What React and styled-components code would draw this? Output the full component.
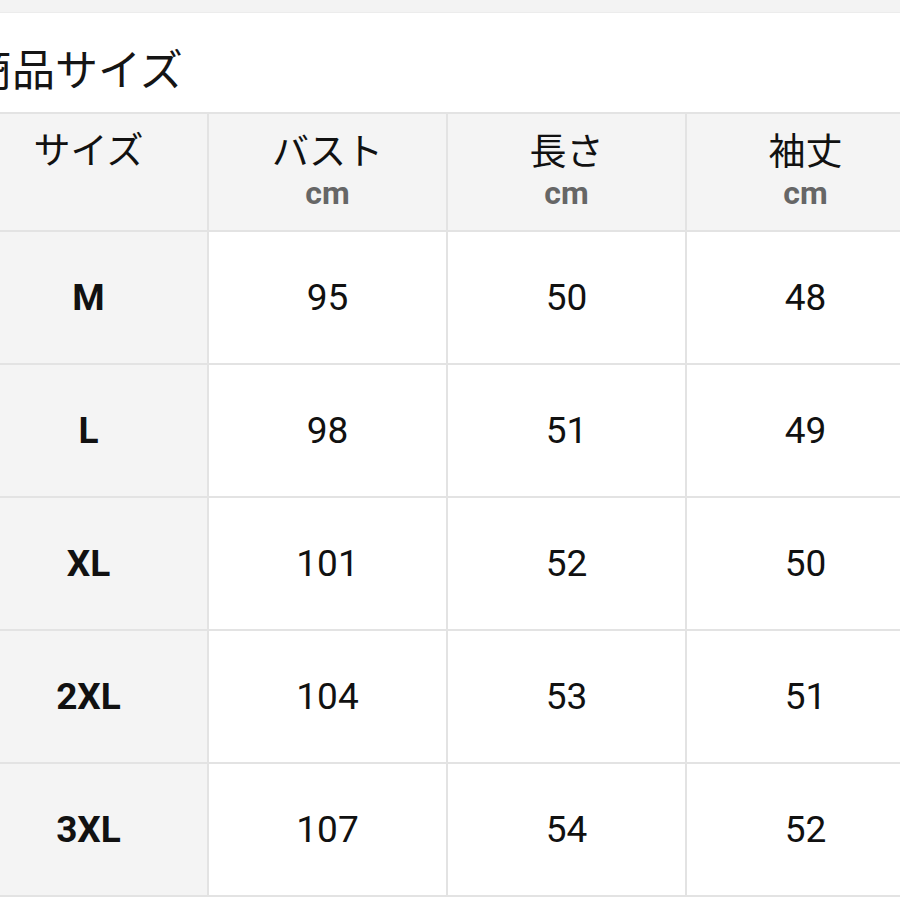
import React from "react";
import styled, { createGlobalStyle } from "styled-components";

const GlobalStyle = createGlobalStyle`
  html, body {
    margin: 0;
    padding: 0;
    background: #ffffff;
    overflow: hidden;
  }
  body {
    font-family: Roboto, "Noto Sans CJK JP", sans-serif;
    color: #111111;
  }
`;

const Page = styled.div`
  width: 900px;
  height: 900px;
  overflow: hidden;
  background: #ffffff;
`;

const TopStrip = styled.div`
  height: 12px;
  background: #f3f3f3;
  border-bottom: 1px solid #ececec;
`;

const Title = styled.h2`
  margin: 0 0 0 -31px;
  height: 99px;
  padding-top: 8px;
  box-sizing: border-box;
  display: flex;
  align-items: center;
  font-size: 43px;
  font-weight: 400;
  color: #151515;
`;

const Grid = styled.div`
  margin-left: -30px;
  width: 960px;
  display: grid;
  grid-template-columns: repeat(4, 237px);
  grid-auto-rows: 131px;
  grid-template-rows: 116px;
  gap: 2px;
  background: #e3e3e3;
  border-top: 2px solid #e3e3e3;
  border-bottom: 2px solid #e3e3e3;
`;

const HeadCell = styled.div`
  background: #f4f4f4;
  display: flex;
  flex-direction: column;
  align-items: center;
  justify-content: center;
  padding-bottom: ${(p) => (p.$single ? "40px" : "0")};
  box-sizing: border-box;
`;

const HeadLabel = styled.div`
  font-size: 37px;
  line-height: 42px;
  color: #111111;
`;

const Unit = styled.div`
  font-size: 32px;
  line-height: 38px;
  font-weight: 700;
  color: #666666;
`;

const Cell = styled.div`
  background: ${(p) => (p.$side ? "#f4f4f4" : "#ffffff")};
  display: flex;
  align-items: center;
  justify-content: center;
  font-size: 37px;
  font-weight: ${(p) => (p.$side ? 700 : 400)};
  color: #111111;
`;

const columns = ["バスト", "長さ", "袖丈"];

const rows = [
  ["M", 95, 50, 48],
  ["L", 98, 51, 49],
  ["XL", 101, 52, 50],
  ["2XL", 104, 53, 51],
  ["3XL", 107, 54, 52],
];

export default function App() {
  return (
    <Page>
      <GlobalStyle />
      <TopStrip />
      <Title>商品サイズ</Title>
      <Grid>
        <HeadCell $single>
          <HeadLabel>サイズ</HeadLabel>
        </HeadCell>
        {columns.map((c) => (
          <HeadCell key={c}>
            <HeadLabel>{c}</HeadLabel>
            <Unit>cm</Unit>
          </HeadCell>
        ))}
        {rows.map((r) =>
          r.map((v, i) => (
            <Cell key={r[0] + i} $side={i === 0}>
              {v}
            </Cell>
          ))
        )}
      </Grid>
    </Page>
  );
}
